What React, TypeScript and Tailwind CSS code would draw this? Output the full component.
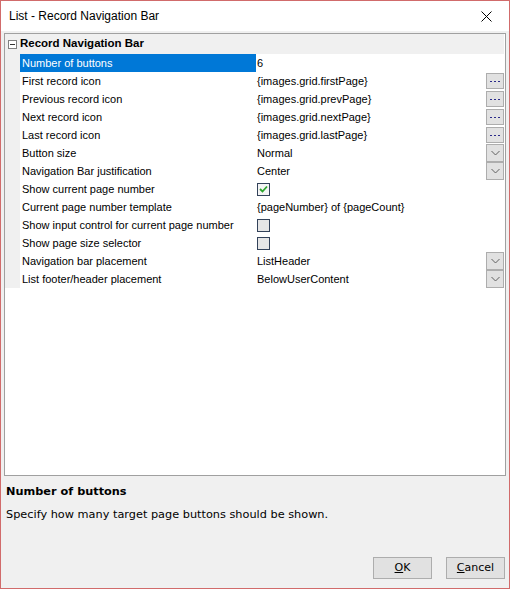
import React from "react";

type Editor = "none" | "dots" | "drop" | "check" | "uncheck";

type Row = { label: string; value?: string; editor: Editor };

const rows: Row[] = [
  { label: "Number of buttons", value: "6", editor: "none" },
  { label: "First record icon", value: "{images.grid.firstPage}", editor: "dots" },
  { label: "Previous record icon", value: "{images.grid.prevPage}", editor: "dots" },
  { label: "Next record icon", value: "{images.grid.nextPage}", editor: "dots" },
  { label: "Last record icon", value: "{images.grid.lastPage}", editor: "dots" },
  { label: "Button size", value: "Normal", editor: "drop" },
  { label: "Navigation Bar justification", value: "Center", editor: "drop" },
  { label: "Show current page number", editor: "check" },
  { label: "Current page number template", value: "{pageNumber} of {pageCount}", editor: "none" },
  { label: "Show input control for current page number", editor: "uncheck" },
  { label: "Show page size selector", editor: "uncheck" },
  { label: "Navigation bar placement", value: "ListHeader", editor: "drop" },
  { label: "List footer/header placement", value: "BelowUserContent", editor: "drop" },
];

const DotsButton = () => (
  <div className="ml-auto w-[18px] h-[16px] border border-[#adadad] bg-[#e1e1e1] flex items-center justify-center">
    <svg width="12" height="4" viewBox="0 0 12 4">
      <rect x="1" y="2" width="2" height="1" fill="#2a2a8a" />
      <rect x="5" y="2" width="2" height="1" fill="#2a2a8a" />
      <rect x="9" y="2" width="2" height="1" fill="#2a2a8a" />
    </svg>
  </div>
);

const DropButton = () => (
  <div className="ml-auto w-[18px] h-[18px] border border-[#adadad] bg-[#e1e1e1] flex items-center justify-center">
    <svg width="9" height="6" viewBox="0 0 9 6">
      <path d="M0.5 1 L4.5 5 L8.5 1" fill="none" stroke="#606060" strokeWidth="1" />
    </svg>
  </div>
);

const CheckBox = ({ checked }: { checked: boolean }) => (
  <div
    className={`w-[13px] h-[13px] border border-[#33425a] flex items-center justify-center ${
      checked ? "bg-[#f4f4f4]" : "bg-[#e6e6e6]"
    }`}
  >
    {checked && (
      <svg width="9" height="8" viewBox="0 0 9 8">
        <path d="M1 4 L3.5 6.5 L8 1.5" fill="none" stroke="#2ca52c" strokeWidth="1.8" />
      </svg>
    )}
  </div>
);

export default function App() {
  return (
    <div className="w-[510px] h-[589px] border border-[#d16b6b] bg-[#f0f0f0] flex flex-col text-black font-['Liberation_Sans',Arial,sans-serif]">
      {/* title bar */}
      <div className="h-[30px] bg-white flex items-center justify-between shrink-0">
        <span className="pl-[8px] text-[12px]">List - Record Navigation Bar</span>
        <div className="w-[46px] h-[30px] flex items-center justify-center">
          <svg width="11" height="11" viewBox="0 0 11 11">
            <path d="M0.5 0.5 L10.5 10.5 M10.5 0.5 L0.5 10.5" stroke="#000" strokeWidth="1" />
          </svg>
        </div>
      </div>

      <div className="flex-1 flex flex-col px-[3px] pt-[2px]">
        {/* property grid */}
        <div className="h-[443px] border border-[#a0a0a0] bg-white flex flex-col text-[11px]">
          <div className="h-[20px] bg-[#f0f0f0] flex items-center mr-[1px]">
            <div className="w-[15px] flex items-center justify-center">
              <div className="w-[9px] h-[9px] border border-[#808080] bg-white flex items-center justify-center">
                <div className="w-[5px] h-[1px] bg-[#333]" />
              </div>
            </div>
            <span className="font-bold text-[11.5px]">Record Navigation Bar</span>
          </div>
          {rows.map((r, i) => (
            <div key={r.label} className="flex h-[18px]">
              <div className="w-[15px] bg-[#f0f0f0]" />
              <div
                className={`w-[236px] pl-[2px] flex items-center whitespace-nowrap ${
                  i === 0 ? "bg-[#0078d7] text-white" : ""
                }`}
              >
                {r.label}
              </div>
              <div className="flex-1 flex items-center pl-[1px] pr-[1px] whitespace-nowrap">
                {r.value && <span>{r.value}</span>}
                {r.editor === "check" && <CheckBox checked />}
                {r.editor === "uncheck" && <CheckBox checked={false} />}
                {r.editor === "dots" && <DotsButton />}
                {r.editor === "drop" && <DropButton />}
              </div>
            </div>
          ))}
        </div>

        {/* description */}
        <div className="pl-[2px] pt-[8px] font-['DejaVu_Sans',Verdana,sans-serif] text-[11.3px]">
          <div className="font-bold">Number of buttons</div>
          <div className="mt-[6px]">Specify how many target page buttons should be shown.</div>
        </div>

        {/* buttons */}
        <div className="mt-auto mb-[9px] flex justify-end gap-[14px] pr-[1px] text-[11px] font-['DejaVu_Sans',Verdana,sans-serif]">
          <button className="w-[59px] h-[22px] border border-[#adadad] bg-[#e1e1e1] flex items-center justify-center">
            <span>
              <span className="underline">O</span>K
            </span>
          </button>
          <button className="w-[59px] h-[22px] border border-[#adadad] bg-[#e1e1e1] flex items-center justify-center">
            <span>
              <span className="underline">C</span>ancel
            </span>
          </button>
        </div>
      </div>
    </div>
  );
}
